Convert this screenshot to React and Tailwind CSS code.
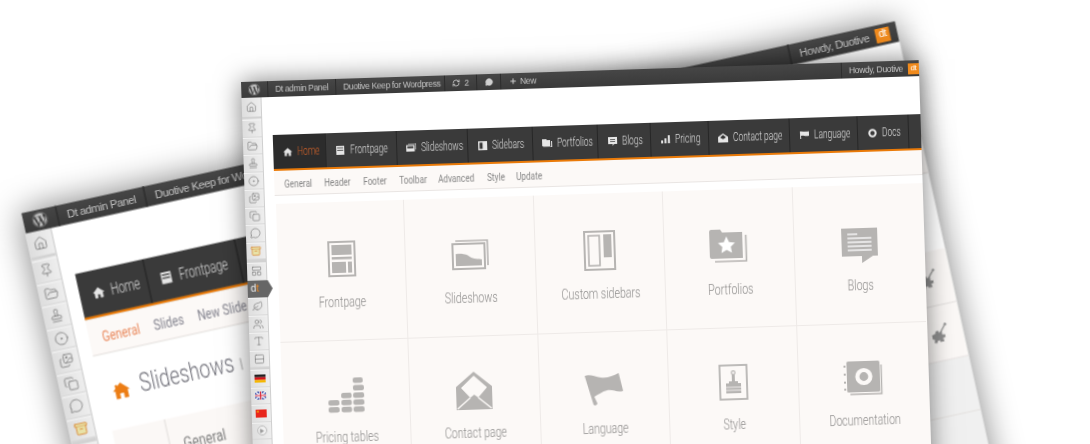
import React from "react";
import { FaWordpress } from "react-icons/fa";
import {
  Home, Pin, FolderOpen, Stamp, CircleDot, Images, Copy, MessageCircle, Archive,
  LayoutPanelTop, Leaf, Users, Type, Rows2, RefreshCw, Plus, Play,
} from "lucide-react";

const NARROW = "[font-family:Roboto,'Liberation_Sans',sans-serif] font-light";
const G = "#b6b4b2";

const IconFrontpage = () => (
  <svg width="28" height="36" viewBox="0 0 28 36">
    <rect x="1" y="1" width="26" height="34" fill="none" stroke={G} strokeWidth="2" />
    <rect x="4" y="4" width="20" height="10" fill={G} />
    <rect x="4" y="16" width="20" height="2.5" fill={G} />
    <rect x="4" y="21" width="14" height="11" fill={G} />
    <rect x="20" y="21" width="4" height="11" fill={G} />
  </svg>
);
const IconSlides = () => (
  <svg width="37" height="30" viewBox="0 0 37 30">
    <path d="M4 1 H36 V26" fill="none" stroke={G} strokeWidth="1.6" />
    <rect x="1" y="4" width="32" height="25" fill="#fcf9f7" stroke={G} strokeWidth="2" />
    <path d="M4 14 C10 13 14 14 18 17 C22 20 26 19 30 20 V26 H4 Z" fill={G} />
  </svg>
);
const IconSidebars = () => (
  <svg width="32" height="40" viewBox="0 0 32 40">
    <rect x="1" y="1" width="30" height="38" fill="none" stroke={G} strokeWidth="2" />
    <rect x="5" y="5" width="11" height="30" fill="none" stroke={G} strokeWidth="1.6" />
    <rect x="20" y="4" width="8" height="23" fill={G} />
  </svg>
);
const IconPortfolio = () => (
  <svg width="38" height="34" viewBox="0 0 38 34">
    <path d="M36.5 6 V32 H5" fill="none" stroke={G} strokeWidth="1.6" />
    <path d="M0 2 Q0 0 2 0 H11 L13 3 H33 V29 H2 Q0 29 0 27 Z" fill={G} />
    <path d="M17 7 L19.6 12.7 L25.5 13.4 L21.2 17.5 L22.3 23.5 L17 20.5 L11.7 23.5 L12.8 17.5 L8.5 13.4 L14.4 12.7 Z" fill="#fff" />
  </svg>
);
const IconBlogs = () => (
  <svg width="36" height="35" viewBox="0 0 36 35" className="mt-[6px]">
    <path d="M0 0 H36 V28 H31 L20 35 V28 H0 Z" fill={G} />
    <g stroke="#fff" strokeWidth="1.3">
      <path d="M6 6 H16" /><path d="M6 10 H30" /><path d="M6 14 H30" /><path d="M6 18 H30" /><path d="M6 22 H30" />
    </g>
  </svg>
);
const IconPricing = () => (
  <svg width="36" height="35" viewBox="0 0 36 35" fill={G}>
    <rect x="0" y="29" width="11" height="5.5" rx="2" />
    <rect x="13" y="29" width="10.5" height="5.5" rx="2" />
    <rect x="25" y="29" width="11" height="5.5" rx="2" />
    <rect x="0" y="22" width="11" height="5.5" rx="2" />
    <rect x="13" y="22" width="10.5" height="5.5" rx="2" />
    <rect x="25" y="22" width="11" height="5.5" rx="2" />
    <rect x="13" y="15" width="10.5" height="5.5" rx="2" />
    <rect x="25" y="15" width="11" height="5.5" rx="2" />
    <rect x="25" y="7.5" width="11" height="5.5" rx="2" />
    <rect x="25" y="0" width="10" height="5.5" rx="2" />
  </svg>
);
const IconContact = () => (
  <svg width="36" height="38" viewBox="0 0 36 38">
    <path d="M18 0 L36 15 V38 H0 V15 Z" fill={G} />
    <path d="M18 4 L5 16 L14 26 L18 23 L22 26 L31 16 Z" fill="#fcf9f7" />
    <path d="M1 37 L14 26 M35 37 L22 26" stroke="#fcf9f7" strokeWidth="1.5" />
  </svg>
);
const IconFlag = () => (
  <svg width="38" height="32" viewBox="0 0 38 32" className="mt-[6px]">
    <path d="M0 2 C5 0 10 3 16 4 C22 5 28 3 34 0 L38 18 C32 20 28 16 22 17 C17 18 13 21 9 23 L12 30 Q10 33 8 31 Z" fill={G} />
  </svg>
);
const IconStyle = () => (
  <svg width="29" height="36" viewBox="0 0 29 36">
    <rect x="1" y="1" width="27" height="34" fill="none" stroke={G} strokeWidth="1.8" />
    <circle cx="14.5" cy="8.5" r="1.8" fill="none" stroke={G} strokeWidth="1.2" />
    <rect x="13" y="10" width="3" height="7" fill={G} />
    <path d="M10 17 H19 V19 H22 V29 H7 V19 H10 Z" fill={G} />
    <path d="M7 23 H22 M7 26 H22" stroke="#fcf9f7" strokeWidth="0.8" />
  </svg>
);
const IconDocs = () => (
  <svg width="39" height="34" viewBox="0 0 39 34">
    <path d="M37.5 4 V33 H6" fill="none" stroke={G} strokeWidth="1.4" />
    <rect x="3" y="0" width="33" height="31" rx="1.5" fill={G} />
    <g fill={G}><rect x="0" y="4" width="2" height="2" /><rect x="0" y="12" width="2" height="2" /><rect x="0" y="20" width="2" height="2" /><rect x="0" y="27" width="2" height="2" /></g>
    <circle cx="20" cy="15.5" r="6.5" fill="none" stroke="#fcf9f7" strokeWidth="4.2" />
  </svg>
);

const W = "#e6e6e6";
const TabHome = () => (
  <svg width="9" height="9" viewBox="0 0 10 10" fill={W}><path d="M5 0.5 L10 5 H8.5 V9.5 H6 V6.5 H4 V9.5 H1.5 V5 H0 Z" /></svg>
);
const TabPage = () => (
  <svg width="8" height="9" viewBox="0 0 8 9"><rect x="0" y="0" width="8" height="9" fill={W} /><path d="M1 2 H7 M1 4.5 H7" stroke="#333" strokeWidth="0.8" /></svg>
);
const TabSlides = () => (
  <svg width="10" height="8" viewBox="0 0 10 8"><path d="M2 0 H10 V6" fill="none" stroke={W} /><rect x="0" y="1.5" width="8.5" height="6.5" fill={W} /><rect x="1.2" y="2.7" width="6" height="2" fill="#333" /></svg>
);
const TabSidebar = () => (
  <svg width="9" height="9" viewBox="0 0 9 9"><rect x="0" y="0" width="9" height="9" fill={W} /><rect x="1.4" y="1.4" width="3" height="6.2" fill="#333" /></svg>
);
const TabFolder = () => (
  <svg width="10" height="8" viewBox="0 0 10 8" fill={W}><path d="M0 0 H4 L5 1 H8 V7 H0 Z" /><path d="M9 2 H10 V8 H1 V7.5 H9 Z" /></svg>
);
const TabBlog = () => (
  <svg width="9" height="9" viewBox="0 0 9 9" fill={W}><path d="M0 0 H9 V7 H6 L4.5 9 V7 H0 Z" /><path d="M2 2.5 H7 M2 4.5 H7" stroke="#333" strokeWidth="0.7" /></svg>
);
const TabBars = () => (
  <svg width="9" height="8" viewBox="0 0 9 8" fill={W}><rect x="0" y="5" width="2" height="3" /><rect x="3.4" y="3" width="2" height="5" /><rect x="6.8" y="0" width="2" height="8" /></svg>
);
const TabMail = () => (
  <svg width="10" height="9" viewBox="0 0 10 9" fill={W}><path d="M5 0 L10 3.5 V9 H0 V3.5 Z" /><path d="M5 1.5 L2 4 L5 5.8 L8 4 Z" fill="#333" /></svg>
);
const TabFlag = () => (
  <svg width="9" height="8" viewBox="0 0 9 8" fill={W}><path d="M0 0.5 C3 0 5 1.5 9 0.5 V5 C5 6 3 4 1 5 L1.2 8 H0.2 Z" /></svg>
);
const TabRing = () => (
  <svg width="9" height="9" viewBox="0 0 9 9"><circle cx="4.5" cy="4.5" r="3.2" fill="none" stroke={W} strokeWidth="2" /></svg>
);

const TABS = [
  { label: "Home", w: "w-[53px]", icon: TabHome },
  { label: "Frontpage", w: "w-[71px]", icon: TabPage },
  { label: "Slideshows", w: "w-[71px]", icon: TabSlides },
  { label: "Sidebars", w: "w-[65px]", icon: TabSidebar },
  { label: "Portfolios", w: "w-[65px]", icon: TabFolder },
  { label: "Blogs", w: "w-[53px]", icon: TabBlog },
  { label: "Pricing", w: "w-[58px]", icon: TabBars },
  { label: "Contact page", w: "w-[81px]", icon: TabMail },
  { label: "Language", w: "w-[68px]", icon: TabFlag },
  { label: "Docs", w: "w-[51px]", icon: TabRing },
];

const Cell = ({ children }) => (
  <div className="flex h-[17.5px] items-center justify-center border-b border-b-[#d8d8d8] border-t border-t-[#f3f3f3]">{children}</div>
);
const si = { size: 11, strokeWidth: 1.3, color: "#6f6f6f" };

const Flag = ({ kind }) => {
  if (kind === "de")
    return (
      <svg width="11" height="8" viewBox="0 0 11 8"><rect width="11" height="2.7" fill="#222" /><rect y="2.7" width="11" height="2.7" fill="#d8141c" /><rect y="5.4" width="11" height="2.6" fill="#f5b800" /></svg>
    );
  if (kind === "uk")
    return (
      <svg width="11" height="8" viewBox="0 0 11 8"><rect width="11" height="8" fill="#3a4fa8" /><path d="M0 0 L11 8 M11 0 L0 8" stroke="#fff" strokeWidth="1.4" /><path d="M5.5 0 V8 M0 4 H11" stroke="#fff" strokeWidth="2.4" /><path d="M5.5 0 V8 M0 4 H11" stroke="#d8283a" strokeWidth="1.2" /></svg>
    );
  return (
    <svg width="11" height="8" viewBox="0 0 11 8"><rect width="11" height="8" fill="#e8261c" /><rect x="1.4" y="1.2" width="1.6" height="1.6" fill="#f6c000" /></svg>
  );
};

function Sidebar() {
  return (
    <div className="w-[20px] shrink-0 border-r border-r-[#cfcfcf] bg-gradient-to-r from-[#dedede] to-[#eeeeee]">
      <div className="flex h-[21px] items-center justify-center border-b-2 border-b-[#d2d2d2]"><Home {...si} /></div>
      <div className="h-px" />
      <Cell><Pin {...si} /></Cell>
      <Cell><FolderOpen {...si} /></Cell>
      <Cell><Stamp {...si} /></Cell>
      <Cell><CircleDot {...si} /></Cell>
      <Cell><Images {...si} /></Cell>
      <Cell><Copy {...si} /></Cell>
      <Cell><MessageCircle {...si} /></Cell>
      <Cell><Archive size={11} strokeWidth={1.5} color="#d9822b" fill="#e8e2a8" /></Cell>
      <div className="h-[3px] bg-[#d2d2d2]" />
      <Cell><LayoutPanelTop {...si} /></Cell>
      <div className="relative z-10 flex h-[17.5px] w-[25px] items-center bg-[#666666] pl-[3px] text-[10px] leading-none text-[#f0f0f0] [clip-path:polygon(0_0,80%_0,100%_50%,80%_100%,0_100%)] [font-family:'Liberation_Sans',sans-serif]">
        d<span className="text-[#f08a24]">t</span>
      </div>
      <Cell><Leaf {...si} /></Cell>
      <Cell><Users {...si} /></Cell>
      <Cell><Type {...si} /></Cell>
      <Cell><Rows2 {...si} /></Cell>
      <div className="h-[2px] bg-[#d2d2d2]" />
      <Cell><Flag kind="de" /></Cell>
      <Cell><Flag kind="uk" /></Cell>
      <Cell><Flag kind="cn" /></Cell>
      <Cell><span className="flex h-[10px] w-[10px] items-center justify-center rounded-full border border-[#bbbbbb] bg-[#f0f0f0]"><Play size={5} color="#999999" fill="#999999" /></span></Cell>
    </div>
  );
}

function TopBar({ howdyPad, crumbGap }) {
  return (
    <div className="relative z-20 flex h-[16px] shrink-0 items-center bg-gradient-to-b from-[#464646] to-[#3a3a3a] text-[8.5px] tracking-[-0.35px] text-[#c4c4c4] [font-family:'Liberation_Sans',sans-serif]">
      <div className="flex h-full w-[27px] items-center justify-center border-r border-r-[#2c2c2c]">
        <FaWordpress size={12} color="#bdbdbd" />
      </div>
      <div className="flex h-full w-[68px] items-center justify-center border-r border-r-[#2c2c2c] whitespace-nowrap">Dt admin Panel</div>
      <div className={`flex h-full items-center border-r border-r-[#2c2c2c] pl-[7px] whitespace-nowrap ${crumbGap}`}>Duotive Keep for Wordpress</div>
      <div className="flex h-full w-[32px] items-center justify-center gap-[4px] border-r border-r-[#2c2c2c]">
        <RefreshCw size={8} strokeWidth={2.4} color="#d0d0d0" />2
      </div>
      <div className="flex h-full w-[24px] items-center justify-center border-r border-r-[#2c2c2c]">
        <MessageCircle size={8} color="#d0d0d0" fill="#d0d0d0" />
      </div>
      <div className="flex h-full items-center gap-[3px] pl-[8px]">
        <Plus size={8} strokeWidth={3} color="#d0d0d0" />New
      </div>
      <div className={`ml-auto flex h-full items-center gap-[5px] border-l border-l-[#2c2c2c] pl-[7px] whitespace-nowrap ${howdyPad}`}>
        Howdy, Duotive
        <span className="flex h-[11px] w-[11px] shrink-0 items-center justify-center bg-[#f08a1c] text-[8px] leading-none text-white">dt</span>
      </div>
    </div>
  );
}

function Nav({ active }) {
  return (
    <div className={`flex h-[36px] shrink-0 overflow-hidden border-b-2 border-b-[#ea7a08] bg-[#3a3a3a] ${NARROW}`}>
      {TABS.map((t, i) => {
        const I = t.icon;
        const on = active && i === 0;
        return (
          <div
            key={t.label}
            className={`flex h-full shrink-0 items-center gap-[5px] overflow-hidden border-r border-r-[#262626] pl-[9px] text-[12px] ${t.w} ${on ? "bg-[#2c2c2c] text-[#d0622a]" : "text-[#dcdcdc]"}`}
          >
            <span className="flex w-[10px] shrink-0 justify-center"><I /></span>
            <span className="inline-block origin-left scale-x-[0.7] whitespace-nowrap">{t.label}</span>
          </div>
        );
      })}
      <div className="w-[30px] shrink-0" />
    </div>
  );
}

const CELLS = [
  ["Frontpage", IconFrontpage],
  ["Slideshows", IconSlides],
  ["Custom sidebars", IconSidebars],
  ["Portfolios", IconPortfolio],
  ["Blogs", IconBlogs],
  ["Pricing tables", IconPricing],
  ["Contact page", IconContact],
  ["Language", IconFlag],
  ["Style", IconStyle],
  ["Documentation", IconDocs],
];

const Sub = ({ w, on, children }) => (
  <span className={`inline-block shrink-0 ${w}`}>
    <span className={`inline-block origin-left scale-x-[0.78] whitespace-nowrap ${on ? "text-[#ea8a5e]" : ""}`}>{children}</span>
  </span>
);

function FrontBody() {
  return (
    <>
      <div className={`flex h-[25px] shrink-0 items-center border-b border-b-[#e9e5e3] bg-[#fcf9f7] pt-[4px] pl-[10px] text-[10.5px] font-normal text-[#858585] ${NARROW}`}>
        <Sub w="w-[40px]">General</Sub><Sub w="w-[39px]">Header</Sub><Sub w="w-[36px]">Footer</Sub><Sub w="w-[39px]">Toolbar</Sub><Sub w="w-[49px]">Advanced</Sub><Sub w="w-[29px]">Style</Sub><Sub w="w-[40px]">Update</Sub>
      </div>
      <div className={`mt-[8px] ml-px grid grid-cols-[128px_repeat(4,129.6px)] bg-[#fcf9f7] ${NARROW}`}>
        {CELLS.map(([label, I], i) => (
          <div key={label} className={`flex h-[139px] flex-col items-center border-[#eeeae8] ${i < 5 ? "border-b pt-[37px]" : "pt-[34px]"} ${i % 5 !== 4 ? "border-r" : ""}`}>
            <div className="flex h-[40px] items-center justify-center"><I /></div>
            <div className={`scale-x-[0.73] text-[14.5px] leading-[18px] whitespace-nowrap text-[#8f8e8d] ${i < 5 ? "mt-[15px]" : "mt-[14px]"}`}>{label}</div>
          </div>
        ))}
      </div>
    </>
  );
}

const Puzzle = () => (
  <svg width="13" height="15" viewBox="0 0 13 15">
    <path d="M0 8 L3 7 L3 6 L5 5 L6 7 L8 6 L8 9 L10 9 L10 11 L8 11.5 L8.5 14 L5.5 14 L5 12.5 L3.5 13 L3 14.5 L1 14 L1.5 11.5 L0 11 Z" fill="#8f8f8f" />
    <path d="M5 9 L11 2" stroke="#8f8f8f" strokeWidth="1" />
    <circle cx="11.5" cy="1.5" r="1" fill="#8f8f8f" />
  </svg>
);

function BackBody() {
  return (
    <>
      <div className={`flex h-[28px] shrink-0 items-center border-b border-b-[#e9e5e3] bg-[#fcf9f7] pt-[6px] pl-[10px] text-[11px] font-normal text-[#858590] ${NARROW}`}>
        <Sub w="w-[40px]" on>General</Sub><Sub w="w-[34px]">Slides</Sub><Sub w="w-[50px]">New Slide</Sub>
      </div>
      <div className={`flex h-[58px] shrink-0 items-center pl-[9px] ${NARROW}`}>
        <svg width="13" height="13" viewBox="0 0 15 15" fill="#ec7d14" className="shrink-0"><path d="M7.5 0.5 L15 7.5 H13 V14.5 H9.2 V10 H5.8 V14.5 H2 V7.5 H0 L2.5 5.2 V2 H4.5 V3.4 Z" /></svg>
        <span className="ml-[8px] inline-block w-[72px] shrink-0">
          <span className="inline-block origin-left scale-x-[0.73] text-[20px] leading-none whitespace-nowrap text-[#6f6f78]">Slideshows</span>
        </span>
        <span className="ml-[6px] h-[9px] w-px shrink-0 bg-[#bbbbbb]" />
      </div>
      <div className={`ml-[2px] ${NARROW}`}>
        {[0, 1, 2, 3].map((r) => (
          <div key={r} className={`flex h-[42px] border-b border-b-[#e6e3e1] ${r < 2 ? "bg-[#fbf8f6]" : "bg-[#f0f0f0]"}`}>
            <div className="h-full w-[41px] border-r border-r-[#e6e3e1]" />
            <div className="flex flex-1 items-center pl-[10px] text-[12px] font-normal text-[#808080]">
              {r === 0 ? <span className="inline-block origin-left scale-x-[0.8]">General</span> : null}
            </div>
            <div className="flex w-[24px] items-center">{r < 2 ? <Puzzle /> : null}</div>
          </div>
        ))}
      </div>
    </>
  );
}

function Win({ className, active, howdyPad, crumbGap, children }) {
  return (
    <div className={`absolute flex h-[480px] w-[678px] origin-top-left flex-col overflow-hidden bg-white shadow-[0_0_24px_rgba(0,0,0,0.5)] blur-[0.35px] ${className}`}>
      <TopBar howdyPad={howdyPad} crumbGap={crumbGap} />
      <div className="flex min-h-0 flex-1">
        <Sidebar />
        <div className="min-w-0 flex-1 pt-[38px] pl-[10px]">
          <Nav active={active} />
          {children}
        </div>
      </div>
    </div>
  );
}

export default function App() {
  return (
    <div className="relative h-[444px] w-[1090px] overflow-hidden bg-white">
      <Win className="top-[213px] left-[21px] rotate-[-12.4deg] scale-[1.32]" howdyPad="pr-[6px]" crumbGap="w-[109px]">
        <BackBody />
      </Win>
      <Win className="top-[81.5px] left-[241px] rotate-[-1.85deg]" active howdyPad="pr-0" crumbGap="w-[109px]">
        <FrontBody />
      </Win>
    </div>
  );
}
